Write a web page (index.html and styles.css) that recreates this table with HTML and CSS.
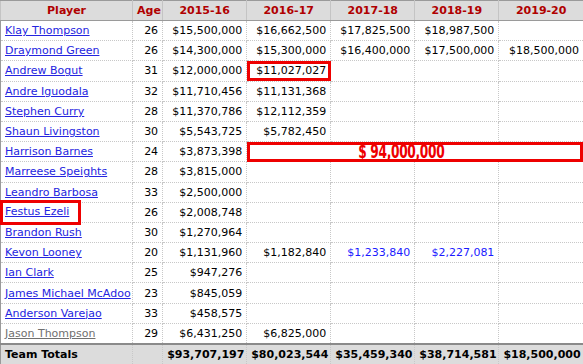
FILE: index.html
```html
<!DOCTYPE html>
<html lang="en">
<head>
  <meta charset="UTF-8">
  <title>Warriors Salaries</title>
  <link rel="stylesheet" href="styles.css">
</head>
<body>

<table class="salaries">
  <colgroup>
    <col class="c-player">
    <col class="c-age">
    <col class="c-year">
    <col class="c-year">
    <col class="c-year">
    <col class="c-year">
    <col class="c-year">
  </colgroup>
  <thead>
    <tr>
      <th class="center">Player</th>
      <th>Age</th>
      <th>2015-16</th>
      <th>2016-17</th>
      <th>2017-18</th>
      <th>2018-19</th>
      <th>2019-20</th>
    </tr>
  </thead>
  <tbody>
    <tr><td><a href="#">Klay Thompson</a></td><td>26</td><td>$15,500,000</td><td>$16,662,500</td><td>$17,825,500</td><td>$18,987,500</td><td></td></tr>
    <tr><td><a href="#">Draymond Green</a></td><td>26</td><td>$14,300,000</td><td>$15,300,000</td><td>$16,400,000</td><td>$17,500,000</td><td>$18,500,000</td></tr>
    <tr><td><a href="#">Andrew Bogut</a></td><td>31</td><td>$12,000,000</td><td class="boxed">$11,027,027</td><td></td><td></td><td></td></tr>
    <tr><td><a href="#">Andre Iguodala</a></td><td>32</td><td>$11,710,456</td><td>$11,131,368</td><td></td><td></td><td></td></tr>
    <tr><td><a href="#">Stephen Curry</a></td><td>28</td><td>$11,370,786</td><td>$12,112,359</td><td></td><td></td><td></td></tr>
    <tr><td><a href="#">Shaun Livingston</a></td><td>30</td><td>$5,543,725</td><td>$5,782,450</td><td></td><td></td><td></td></tr>
    <tr><td><a href="#">Harrison Barnes</a></td><td>24</td><td>$3,873,398</td><td colspan="4" class="offer"><span>$ 94,000,000</span></td></tr>
    <tr><td><a href="#">Marreese Speights</a></td><td>28</td><td>$3,815,000</td><td></td><td></td><td></td><td></td></tr>
    <tr><td><a href="#">Leandro Barbosa</a></td><td>33</td><td>$2,500,000</td><td></td><td></td><td></td><td></td></tr>
    <tr><td><span class="mark"><a href="#">Festus Ezeli</a></span></td><td>26</td><td>$2,008,748</td><td></td><td></td><td></td><td></td></tr>
    <tr><td><a href="#">Brandon Rush</a></td><td>30</td><td>$1,270,964</td><td></td><td></td><td></td><td></td></tr>
    <tr><td><a href="#">Kevon Looney</a></td><td>20</td><td>$1,131,960</td><td>$1,182,840</td><td class="option">$1,233,840</td><td class="option">$2,227,081</td><td></td></tr>
    <tr><td><a href="#">Ian Clark</a></td><td>25</td><td>$947,276</td><td></td><td></td><td></td><td></td></tr>
    <tr><td><a href="#">James Michael McAdoo</a></td><td>23</td><td>$845,059</td><td></td><td></td><td></td><td></td></tr>
    <tr><td><a href="#">Anderson Varejao</a></td><td>33</td><td>$458,575</td><td></td><td></td><td></td><td></td></tr>
    <tr><td><a href="#" class="gone">Jason Thompson</a></td><td>29</td><td>$6,431,250</td><td>$6,825,000</td><td></td><td></td><td></td></tr>
  </tbody>
  <tfoot>
    <tr>
      <td>Team Totals</td>
      <td></td>
      <td>$93,707,197</td>
      <td>$80,023,544</td>
      <td>$35,459,340</td>
      <td>$38,714,581</td>
      <td>$18,500,000</td>
    </tr>
  </tfoot>
</table>

</body>
</html>
```

FILE: styles.css
```css
* {
  box-sizing: border-box;
}

body {
  margin: 0;
  background: #fff;
  font-family: 'DejaVu Sans', Verdana, sans-serif;
  font-size: 11px;
  color: #000;
}

.salaries {
  width: 583px;
  table-layout: fixed;
  border-collapse: collapse;
}

.c-player { width: 132px; }
.c-age { width: 30px; }
.c-year { width: 84px; }

.salaries th {
  height: 20px;
  padding: 0 4px;
  background: #dcdcdc;
  color: #b00000;
  font-weight: bold;
  text-align: center;
  border: 1px solid #c4c4c4;
  border-top: 1px solid #9a9a9a;
  border-bottom: 1px solid #9a9a9a;
}

.salaries tbody tr {
  height: 20.2px;
}

.salaries td {
  padding: 0 4px;
  line-height: 13px;
  text-align: right;
  white-space: nowrap;
  border-right: 1px dotted #c8c8c8;
  border-bottom: 1px dotted #c8c8c8;
}

.salaries td:first-child {
  text-align: left;
  border-left: 1px solid #9a9a9a;
}

.salaries td:last-child,
.salaries th:last-child {
  border-right: none;
}

.salaries a {
  color: #2424e0;
}

.salaries a.gone {
  color: #707070;
}

.option {
  color: #1a1aff;
}

td.boxed {
  outline: 3px solid #ee0000;
  outline-offset: -3px;
}

td.offer {
  outline: 3px solid #ee0000;
  outline-offset: -3px;
  padding-right: 32px;
  text-align: center;
  color: #ee0000;
}

td.offer span {
  display: inline-block;
  font-family: 'DejaVu Sans Condensed', 'DejaVu Sans', sans-serif;
  font-stretch: condensed;
  font-size: 20px;
  font-weight: bold;
  line-height: 16px;
  letter-spacing: -0.5px;
  transform: scaleX(0.68);
}

.mark {
  display: inline-block;
  margin: -4px 0 -4px -5px;
  padding: 2px 9px 4px 2px;
  border: 3px solid #ee0000;
}

.salaries tfoot tr {
  height: 21px;
}

.salaries tfoot td {
  background: #dcdcdc;
  font-weight: bold;
  border-top: 2px solid #8a8a8a;
  border-bottom: 1px solid #9a9a9a;
}
```
